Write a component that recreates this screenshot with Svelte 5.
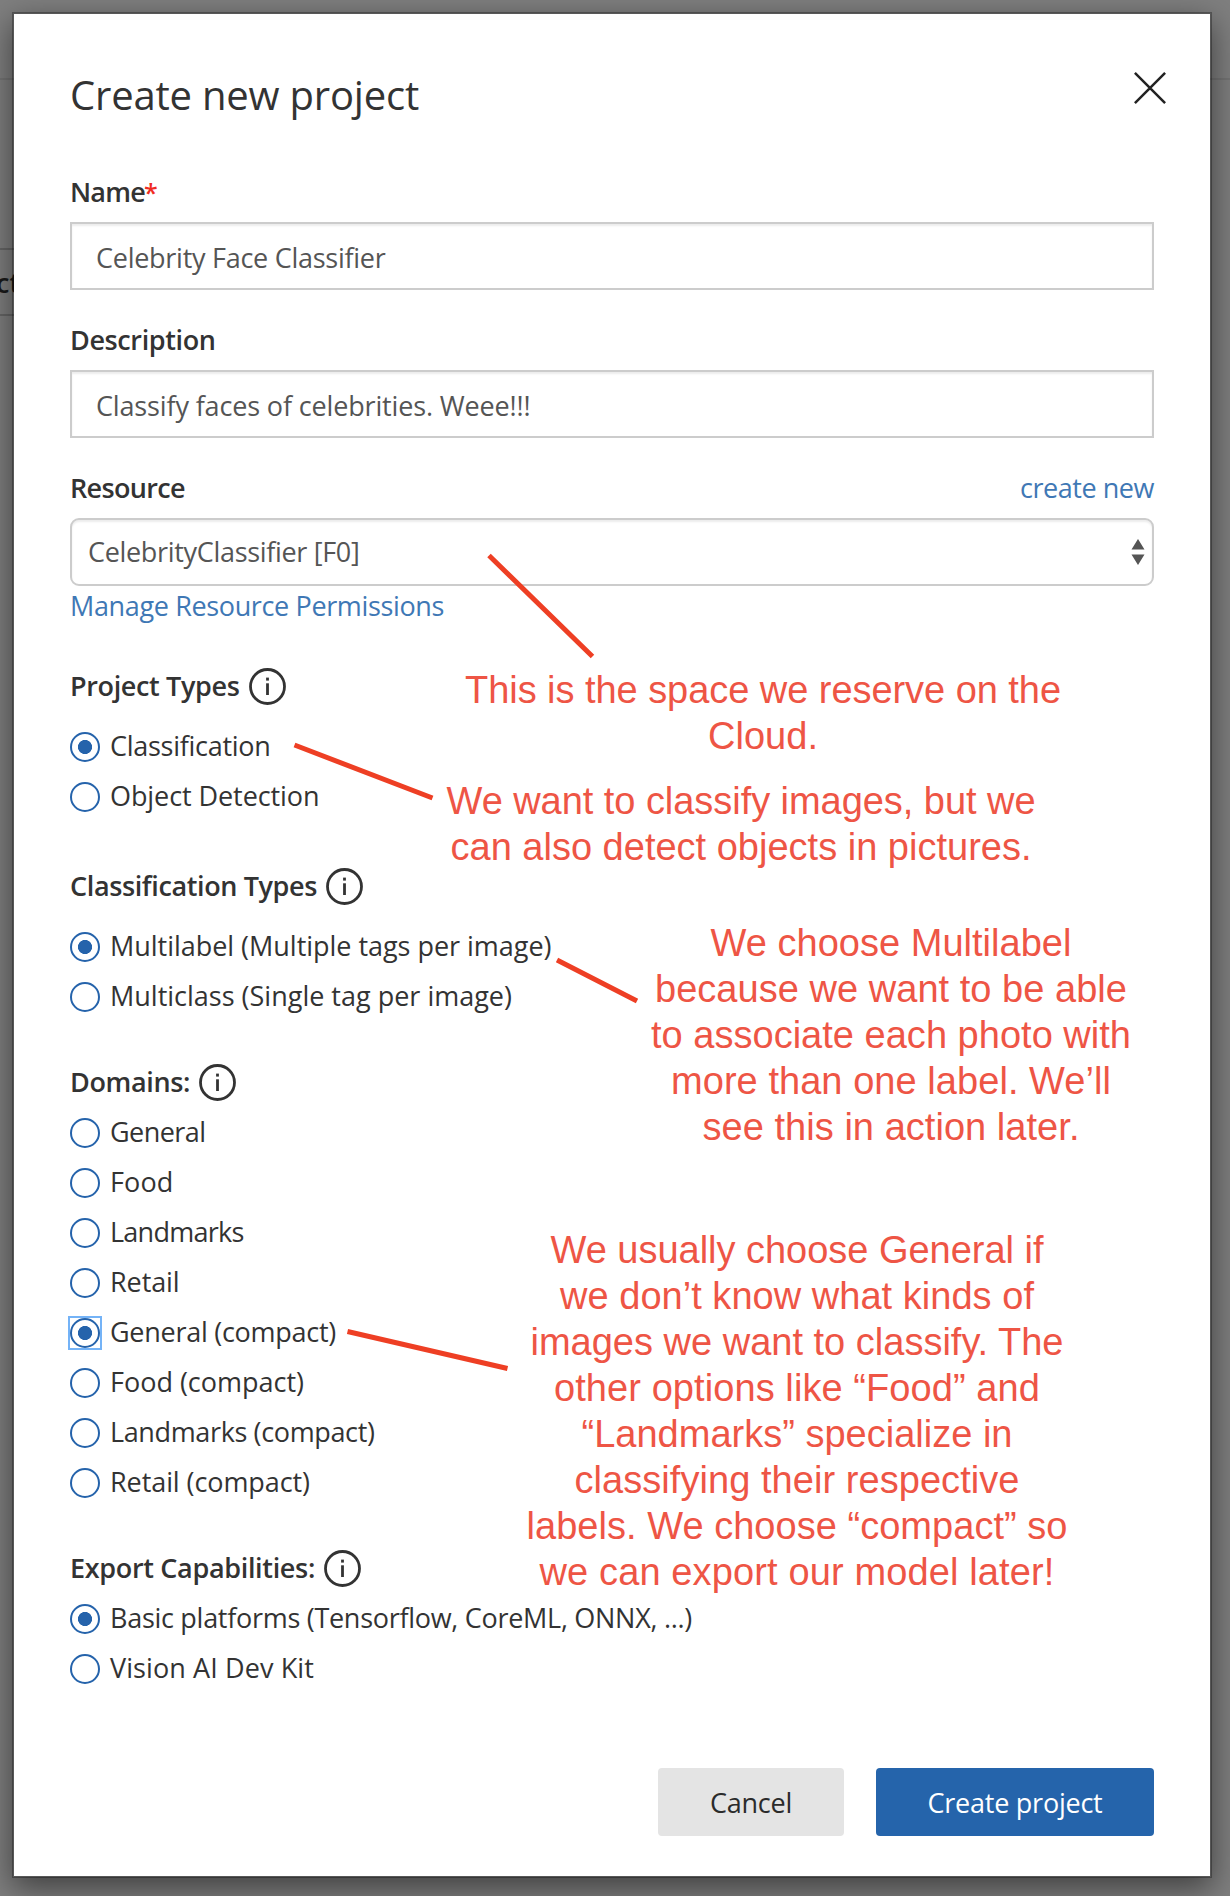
<script>
  const groups = [
    {
      title: 'Project Types', w: 169.5, cls: 'wide', options: [
        { label: 'Classification', w: 160.5, on: true },
        { label: 'Object Detection', w: 209.5 }
      ]
    },
    {
      title: 'Classification Types', w: 247, cls: 'wide second', options: [
        { label: 'Multilabel (Multiple tags per image)', w: 441.5, on: true },
        { label: 'Multiclass (Single tag per image)', w: 402 }
      ]
    },
    {
      title: 'Domains:', w: 120, cls: '', options: [
        { label: 'General', w: 95.5 },
        { label: 'Food', w: 63.5 },
        { label: 'Landmarks', w: 133.5 },
        { label: 'Retail', w: 69.5 },
        { label: 'General (compact)', w: 226, on: true, focus: true },
        { label: 'Food (compact)', w: 194 },
        { label: 'Landmarks (compact)', w: 264.5 },
        { label: 'Retail (compact)', w: 200 }
      ]
    },
    {
      title: 'Export Capabilities:', w: 245, cls: '', options: [
        { label: 'Basic platforms (Tensorflow, CoreML, ONNX, ...)', w: 582, on: true },
        { label: 'Vision AI Dev Kit', w: 204 }
      ]
    }
  ];

  const notes = [
    { cls: 'n1', lines: [['This is the space we reserve on the', 596], ['Cloud.', 110]] },
    { cls: 'n2', lines: [['We want to classify images, but we', 589], ['can also detect objects in pictures.', 581]] },
    {
      cls: 'n3', lines: [['We choose Multilabel', 361], ['because we want to be able', 472],
        ['to associate each photo with', 480], ['more than one label. We’ll', 440], ['see this in action later.', 377]]
    },
    {
      cls: 'n4', lines: [['We usually choose General if', 493], ['we don’t know what kinds of', 474],
        ['images we want to classify. The', 533], ['other options like “Food” and', 486],
        ['“Landmarks” specialize in', 431], ['classifying their respective', 445],
        ['labels. We choose “compact” so', 541], ['we can export our model later!', 515]]
    }
  ];

  // Tracks a run of text so that it takes up the given width.
  function fit(node, width) {
    const natural = node.getBoundingClientRect().width;
    node.style.letterSpacing = `${(width - natural) / [...node.textContent].length}px`;
  }
</script>

{#snippet run(text, w)}<span class="run" use:fit={w}>{text}</span>{/snippet}

<div class="page">
  <div class="behind">
    <div class="bar"></div>
    <div class="tab">ct</div>
  </div>

  <div class="modal">
    <header>
      <h1>{@render run('Create new project', 349)}</h1>
      <svg class="close" viewBox="0 0 32 32"><path d="M.9.9 31.1 31.1M31.1.9.9 31.1" /></svg>
    </header>

    <div class="label first">{@render run('Name', 75)}<span class="star">*</span></div>
    <div class="input">{@render run('Celebrity Face Classifier', 289.5)}</div>

    <div class="label">{@render run('Description', 145.5)}</div>
    <div class="input">{@render run('Classify faces of celebrities. Weee!!!', 434.5)}</div>

    <div class="label">{@render run('Resource', 115)}<a class="new">{@render run('create new', 134)}</a></div>
    <div class="input select">
      {@render run('CelebrityClassifier [F0]', 271.5)}
      <svg class="sort" viewBox="0 0 14 30"><path d="M7 0 13.5 12H.5zM7 30 .5 18h13z" /></svg>
    </div>
    <a class="manage">{@render run('Manage Resource Permissions', 374)}</a>

    {#each groups as g}
      <section class={g.cls}>
        <div class="heading">
          {@render run(g.title, g.w)}
          <svg class="info" viewBox="0 0 37 37">
            <circle cx="18.5" cy="18.5" r="17" />
            <path d="M18.5 15.3V27" /><path d="M18.5 9.6v3" />
          </svg>
        </div>
        <div class="options">
          {#each g.options as o}
            <div class="option">
              <span class="radio" class:on={o.on} class:focus={o.focus}></span>
              <span class="text">{@render run(o.label, o.w)}</span>
            </div>
          {/each}
        </div>
      </section>
    {/each}

    <footer>
      <button class="cancel">{@render run('Cancel', 82)}</button>
      <button class="create">{@render run('Create project', 175)}</button>
    </footer>
  </div>

  <svg class="lines" viewBox="0 0 1230 1896">
    <path d="M489 555.5 592.5 656.5M294.5 745 432.5 798M557 960 637 1001M347.5 1331.5 507.5 1368.5" />
  </svg>
  {#each notes as n}
    <div class="note {n.cls}">
      {#each n.lines as [text, w]}<div>{@render run(text, w)}</div>{/each}
    </div>
  {/each}
</div>

<style>
  :global(body) { background: #7f7f7f; }
  .page {
    position: relative;
    box-sizing: border-box;
    width: 1230px;
    height: 1896px;
    padding: 12px;
    overflow: hidden;
    font: 400 27px/40px 'Open Sans', 'Noto Sans', sans-serif;
    color: #333;
    white-space: nowrap;
  }
  .behind { position: absolute; inset: 0; }
  .bar { height: 78px; border-bottom: 2px solid #747474; }
  .tab {
    width: 40px;
    height: 64px;
    margin-top: 168px;
    border: solid #666;
    border-width: 2px 0;
    font-weight: 600;
    line-height: 66px;
    text-indent: -4px;
    color: #1a1a1a;
  }
  .modal {
    position: relative;
    box-sizing: border-box;
    width: 1200px;
    height: 1866px;
    padding: 50px 56px 0;
    border: 2px solid rgba(0, 0, 0, .3);
    background: #fff;
    background-clip: padding-box;
    box-shadow: 0 10px 30px rgba(0, 0, 0, .5);
  }
  .run { display: inline-block; white-space: pre; }
  header { display: flex; height: 60px; justify-content: space-between; }
  h1 { margin: 0; font-size: 40px; font-weight: 400; line-height: 62px; }
  .close {
    width: 32px;
    height: 32px;
    margin: 8px -12px 0 0;
    fill: none;
    stroke: #222;
    stroke-width: 2.5;
  }
  .label { display: flex; height: 40px; margin: 30px 0 10px; font-weight: 600; }
  .label.first { margin-top: 48px; }
  .star { margin-left: -1px; font-size: 25px; color: #f02c22; }
  a { color: #3f78b5; font-weight: 400; }
  .new { margin-left: auto; }
  .manage { display: block; height: 40px; }
  .input {
    display: flex;
    align-items: center;
    box-sizing: border-box;
    height: 68px;
    padding: 3px 4px 0 24px;
    border: 2px solid #ccc;
    color: #555;
    box-shadow: inset 0 2px 2px rgba(0, 0, 0, .075);
  }
  .select { justify-content: space-between; padding: 0 7px 0 16px; border-radius: 9px; }
  .sort { width: 14px; height: 30px; fill: #555; transform: scaleY(.87); }
  section { margin-top: 40px; }
  section.second { margin-top: 44px; }
  .heading { display: flex; align-items: center; gap: 9px; height: 40px; font-weight: 600; }
  .info { width: 37px; height: 37px; fill: none; stroke: #333; stroke-width: 2.8; }
  .options { margin-top: 6px; }
  .wide .options { margin-top: 16px; }
  .option { display: flex; align-items: center; gap: 10px; height: 50px; }
  .text { padding-bottom: 2px; }
  .radio {
    box-sizing: border-box;
    width: 30px;
    height: 30px;
    border: 2px solid #2563ab;
    border-radius: 50%;
  }
  .on { background: radial-gradient(circle, #2563ab 6.7px, transparent 7.4px); }
  .focus { position: relative; }
  .focus::after { content: ''; position: absolute; inset: -4px; border: 2px solid #74b3f7; }
  footer { display: flex; justify-content: flex-end; gap: 32px; margin-top: 74px; }
  button {
    height: 68px;
    padding: 1px 0 0;
    border: 0;
    border-radius: 4px;
    font: inherit;
  }
  .cancel { width: 186px; background: #e4e4e4; color: #2b2b2b; }
  .create { width: 278px; background: #2564ab; color: #fff; }
  .lines {
    position: absolute;
    inset: 0;
    width: 1230px;
    height: 1896px;
    fill: none;
    stroke: #ee3f24;
    stroke-width: 5;
  }
  .note {
    position: absolute;
    display: flex;
    flex-direction: column;
    align-items: center;
    width: 620px;
    font: 38px/46px 'Liberation Sans', Arial, sans-serif;
    color: #ee5545;
  }
  .n1 { left: 453px; top: 667px; }
  .n2 { left: 431px; top: 778px; }
  .n3 { left: 581px; top: 920px; }
  .n4 { left: 487px; top: 1227px; }
</style>
